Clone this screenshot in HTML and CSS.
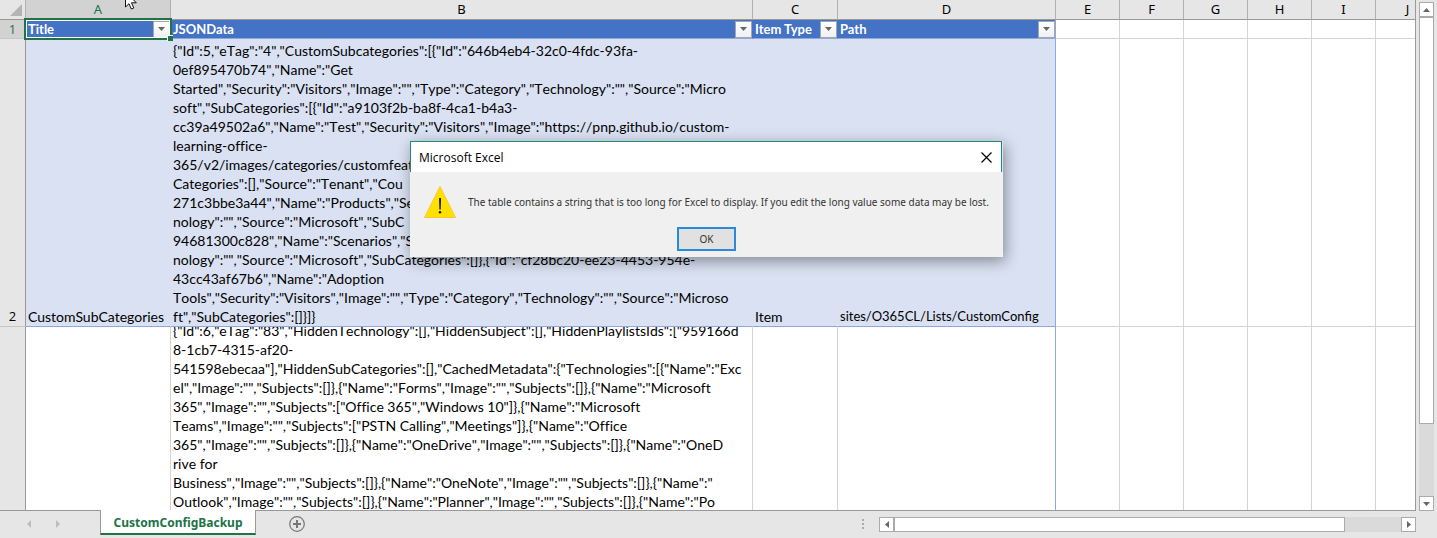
FILE: index.html
```html
<!DOCTYPE html>
<html lang="en">
<head>
<meta charset="utf-8">
<title>CustomConfigBackup</title>
<link rel="stylesheet" href="styles.css">
</head>
<body>
<div class="app">
  <main class="workspace">
    <div class="sheet">
      <table class="grid">
        <colgroup>
          <col class="col-rows"><col class="col-a"><col class="col-b"><col class="col-c"><col class="col-d">
          <col class="col-std"><col class="col-std"><col class="col-std"><col class="col-std"><col class="col-std"><col>
        </colgroup>
        <thead>
          <tr class="letters">
            <th class="corner"><svg width="12" height="12" viewBox="0 0 12 12"><path d="M12 0V12H0Z" fill="#b4b4b4"/></svg></th>
            <th class="active">A</th><th>B</th><th>C</th><th>D</th><th>E</th><th>F</th><th>G</th><th>H</th><th>I</th><th class="partial">J</th>
          </tr>
        </thead>
        <tbody>
          <tr class="titles">
            <th class="rownum active">1</th>
            <td class="head selected"><div class="field"><span>Title</span><button class="filter" aria-label="Filter Title"><svg width="7" height="4" viewBox="0 0 7 4"><path d="M0 0H7L3.500 4Z" fill="#666"/></svg></button></div><i class="handle"></i></td>
            <td class="head"><div class="field"><span>JSONData</span><button class="filter" aria-label="Filter JSONData"><svg width="7" height="4" viewBox="0 0 7 4"><path d="M0 0H7L3.500 4Z" fill="#666"/></svg></button></div></td>
            <td class="head"><div class="field"><span>Item Type</span><button class="filter" aria-label="Filter Item Type"><svg width="7" height="4" viewBox="0 0 7 4"><path d="M0 0H7L3.500 4Z" fill="#666"/></svg></button></div></td>
            <td class="head edge"><div class="field"><span>Path</span><button class="filter" aria-label="Filter Path"><svg width="7" height="4" viewBox="0 0 7 4"><path d="M0 0H7L3.500 4Z" fill="#666"/></svg></button></div></td>
            <td></td><td></td><td></td><td></td><td></td><td></td>
          </tr>
          <tr class="banded">
            <th class="rownum">2</th>
            <td class="band">CustomSubCategories</td>
            <td class="band"><div class="json">{"Id":5,"eTag":"4","CustomSubcategories":[{"Id":"646b4eb4-32c0-4fdc-93fa-<br>0ef895470b74","Name":"Get<br>Started","Security":"Visitors","Image":"","Type":"Category","Technology":"","Source":"Micro<br>soft","SubCategories":[{"Id":"a9103f2b-ba8f-4ca1-b4a3-<br>cc39a49502a6","Name":"Test","Security":"Visitors","Image":"https://pnp.github.io/custom-<br>learning-office-<br>365/v2/images/categories/customfeat<br>Categories":[],"Source":"Tenant","Cou<br>271c3bbe3a44","Name":"Products","Se<br>nology":"","Source":"Microsoft","SubC<br>94681300c828","Name":"Scenarios","Se<br>nology":"","Source":"Microsoft","SubCategories":[]},{"Id":"cf28bc20-ee23-4453-954e-<br>43cc43af67b6","Name":"Adoption<br>Tools","Security":"Visitors","Image":"","Type":"Category","Technology":"","Source":"Microso<br>ft","SubCategories":[]}]}</div></td>
            <td class="band">Item</td>
            <td class="band edge path">sites/O365CL/Lists/CustomConfig</td>
            <td></td><td></td><td></td><td></td><td></td><td></td>
          </tr>
          <tr class="plain">
            <th class="rownum"></th>
            <td></td>
            <td><div class="clip"><div class="json cut">{"Id":6,"eTag":"83","HiddenTechnology":[],"HiddenSubject":[],"HiddenPlaylistsIds":["959166d<br>8-1cb7-4315-af20-<br>541598ebecaa"],"HiddenSubCategories":[],"CachedMetadata":{"Technologies":[{"Name":"Exc<br>el","Image":"","Subjects":[]},{"Name":"Forms","Image":"","Subjects":[]},{"Name":"Microsoft<br>365","Image":"","Subjects":["Office 365","Windows 10"]},{"Name":"Microsoft<br>Teams","Image":"","Subjects":["PSTN Calling","Meetings"]},{"Name":"Office<br>365","Image":"","Subjects":[]},{"Name":"OneDrive","Image":"","Subjects":[]},{"Name":"OneD<br>rive for<br>Business","Image":"","Subjects":[]},{"Name":"OneNote","Image":"","Subjects":[]},{"Name":"<br>Outlook","Image":"","Subjects":[]},{"Name":"Planner","Image":"","Subjects":[]},{"Name":"Po</div></div></td>
            <td></td><td class="edge"></td>
            <td></td><td></td><td></td><td></td><td></td><td></td>
          </tr>
        </tbody>
      </table>
    </div>
    <div class="scroll vertical">
      <button class="arrow" aria-label="Scroll up"><svg width="7" height="4" viewBox="0 0 7 4"><path d="M0 4H7L3.500 0Z" fill="#666"/></svg></button>
      <div class="track"><div class="thumb"></div></div>
      <button class="arrow" aria-label="Scroll down"><svg width="7" height="4" viewBox="0 0 7 4"><path d="M0 0H7L3.500 4Z" fill="#666"/></svg></button>
    </div>
  </main>
  <footer class="tabs">
    <div class="nav">
      <button class="plainbtn" aria-label="Previous sheet"><svg width="4" height="8" viewBox="0 0 4 8"><path d="M4 0V8L0 4Z" fill="#bdbdbd"/></svg></button>
      <button class="plainbtn" aria-label="Next sheet"><svg width="4" height="8" viewBox="0 0 4 8"><path d="M0 0V8L4 4Z" fill="#bdbdbd"/></svg></button>
    </div>
    <button class="tab">CustomConfigBackup</button>
    <button class="plainbtn add" aria-label="New sheet"><svg width="16" height="16" viewBox="0 0 16 16" fill="none" stroke="#777"><circle cx="8" cy="8" r="7.300" stroke-width="1.200"/><path d="M8 4V12M4 8H12" stroke-width="2"/></svg></button>
    <svg class="grip" width="2" height="10" viewBox="0 0 2 10" fill="#aaa"><path d="M0 0H2V2H0ZM0 4H2V6H0ZM0 8H2V10H0Z"/></svg>
    <div class="scroll horizontal">
      <button class="arrow" aria-label="Scroll left"><svg width="4" height="7" viewBox="0 0 4 7"><path d="M4 0V7L0 3.500Z" fill="#666"/></svg></button>
      <div class="track"><div class="thumb"></div></div>
      <button class="arrow" aria-label="Scroll right"><svg width="4" height="7" viewBox="0 0 4 7"><path d="M0 0V7L4 3.500Z" fill="#666"/></svg></button>
    </div>
  </footer>

  <section class="dialog" role="alertdialog" aria-labelledby="dlg-title" aria-describedby="dlg-text">
    <header class="dialog-head">
      <span id="dlg-title">Microsoft Excel</span>
      <button class="plainbtn" aria-label="Close"><svg width="11" height="11" viewBox="0 0 11 11"><path d="M0.500 0.500L10.500 10.500M10.500 0.500L0.500 10.500" stroke="#000" stroke-width="1.200"/></svg></button>
    </header>
    <div class="dialog-body">
      <div class="message">
        <svg width="32" height="32" viewBox="0 0 32 32"><path d="M16 .5L31.500 31.500H.5Z" fill="#ffe100" stroke="#fcc62c"/><path d="M15.100 12H17L16.700 23.500H15.400Z" fill="#111"/><circle cx="16" cy="26.300" r="1.200" fill="#111"/></svg>
        <p id="dlg-text">The table contains a string that is too long for Excel to display. If you edit the long value some data may be lost.</p>
      </div>
      <button class="ok">OK</button>
    </div>
  </section>

  <svg class="pointer" width="12" height="19" viewBox="0 0 12 19"><path d="M.5 .5V16L4 12.700L6.300 18L8.800 17L6.500 11.800H11.300Z" fill="#fff" stroke="#111"/></svg>
</div>
</body>
</html>
```
FILE: styles.css
```css
* { box-sizing: border-box; }
body { margin: 0; background: #e6e6e6; font-family: Lato, sans-serif; font-size: 14px; color: #000; }
button { font: inherit; padding: 0; margin: 0; border-radius: 0; }
svg { display: block; }
.app { position: relative; display: flex; flex-direction: column; height: 100vh; overflow: hidden; }

.workspace { flex: 1; min-height: 0; display: flex; }
.sheet { flex: 1; min-width: 0; overflow: hidden; background: #fff; border-right: 1px solid #999; border-bottom: 1px solid #999; }
.grid { width: 100%; table-layout: fixed; border-collapse: separate; border-spacing: 0; line-height: 19px; }
.col-rows { width: 26px; }
.col-a { width: 145px; }
.col-b { width: 582px; }
.col-c { width: 85px; }
.col-d { width: 218px; }
.col-std { width: 64px; }
.grid th, .grid td { padding: 0 0 0 2px; text-align: left; vertical-align: bottom; white-space: nowrap; border-right: 1px solid #d4d4d4; border-bottom: 1px solid #d4d4d4; }
.grid tr > :last-child { border-right: 0; }

.grid .letters th { height: 20px; padding: 0; text-align: center; background: #e6e6e6; border-color: #999; border-right-color: #b0b0b0; font: 13px/19px "Noto Sans", sans-serif; }
.grid .letters .active, .grid .rownum.active { background: #d2d2d2; color: #217346; }
.grid .letters .corner { padding: 0 0 3px 10px; line-height: 12px; }
.grid .letters .partial { padding-left: 24px; }
.grid .rownum { padding: 0; text-align: center; background: #e6e6e6; border-right-color: #999; border-bottom-color: #c6c6c6; font-weight: 400; font-size: 13px; font-family: "Open Sans", sans-serif; }

.titles { line-height: 18px; }
.grid .head { background: #4472c4; border-right-color: #4472c4; border-bottom-color: #8ea9db; color: #fff; font-size: 13px; font-weight: 700; }
.grid .band { background: #d9e1f2; border-right-color: #d9e1f2; border-bottom-color: #8ea9db; }
.grid .edge { border-right-color: #8ea9db; }
.grid .path { font-size: 13px; }
.field { display: flex; align-items: center; justify-content: space-between; height: 18px; }
.filter { display: grid; place-items: center; width: 17px; height: 17px; border: 1px solid #a6a6a6; background: linear-gradient(#fff, #eef0f4); }
.grid .selected { position: relative; }
.selected::after { content: ""; position: absolute; inset: -2px; border: 2px solid #217346; outline: 1px solid #fff; outline-offset: -3px; pointer-events: none; }
.handle { position: absolute; z-index: 1; right: -3px; bottom: -3px; width: 6px; height: 6px; background: #217346; border: 1px solid #fff; border-width: 1px 0 0 1px; }

.banded td, .banded th { height: 288px; }
.plain td, .plain th { height: 200px; vertical-align: top; }
.json { font-kerning: none; font-variant-ligatures: none; }
.clip { overflow: hidden; }
.cut { margin-top: -6px; }

.scroll { display: flex; }
.vertical { flex-direction: column; width: 15px; margin: 2px 3px 0; }
.arrow { display: grid; place-items: center; flex: none; width: 15px; height: 15px; border: 1px solid #ababab; background: #fff; }
.track { flex: 1; display: flex; background: #dadada; }
.thumb { background: #fff; border: 1px solid #ababab; }
.vertical .track { flex-direction: column; }
.vertical .thumb { height: 85%; }
.horizontal .thumb { width: 89%; }

.tabs { display: flex; align-items: flex-start; height: 27px; }
.plainbtn { border: 0; background: none; }
.nav { display: flex; gap: 25px; width: 100px; padding: 9px 0 0 27px; }
.tab { position: relative; height: 25px; width: 156px; margin-top: -1px; padding-top: 2px; border: 1px solid #999; border-width: 0 1px 2px; border-bottom-color: #217346; background: #fff; color: #217346; font-family: "Noto Sans", sans-serif; font-size: 12px; font-weight: 700; }
.add { margin: 5px 0 0 33px; }
.grip { margin: 8px 15px 0 auto; }
.horizontal { width: 537px; margin: 6px 21px 0 0; }

.dialog { position: absolute; left: 410px; top: 141px; width: 593px; box-shadow: 2px 4px 14px rgba(0, 0, 0, .4); font-family: "Noto Sans", sans-serif; }
.dialog-head { display: flex; align-items: center; justify-content: space-between; height: 31px; margin-right: 1px; padding: 0 9px 0 8px; border: 1px solid #1e8a7c; border-bottom: 0; background: #fff; font: 12px "Open Sans", sans-serif; }
.dialog-body { display: flex; flex-direction: column; align-items: center; gap: 9px; padding: 14px 14px 6px; background: #f0f0f0; color: #333; font-size: 10px; }
.message { display: flex; align-items: center; gap: 12px; width: 100%; }
.message p { margin: 0; white-space: nowrap; }
.ok { width: 59px; height: 24px; border: 2px solid #2a8ad8; background: #e1e1e1; color: #333; }
.pointer { position: absolute; left: 125px; top: -9px; }
```
